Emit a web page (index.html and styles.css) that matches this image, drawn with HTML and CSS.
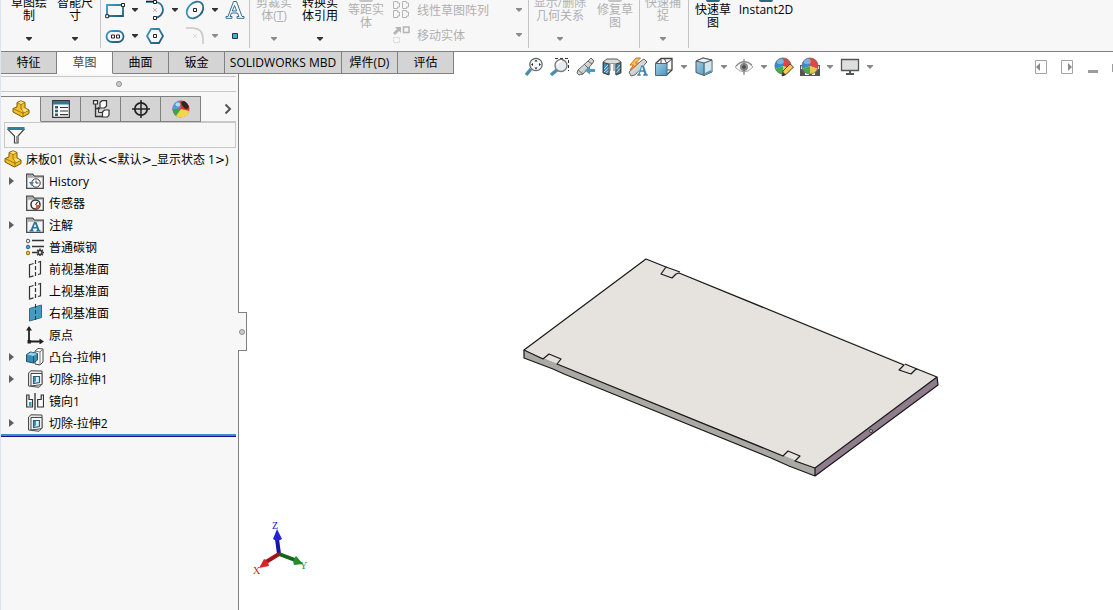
FILE: index.html
```html
<!DOCTYPE html>
<html lang="zh-CN">
<head>
<meta charset="utf-8">
<title>床板01</title>
<link rel="stylesheet" href="styles.css">
</head>
<body>
<svg class="defs" aria-hidden="true">
  <defs>
    <linearGradient id="blue" x1="0" y1="0" x2="1" y2="1"><stop offset="0" stop-color="#3e9cc4"/><stop offset="1" stop-color="#1f5878"/></linearGradient>
    <linearGradient id="cube" x1="0" y1="0" x2="1" y2="1"><stop offset="0" stop-color="#9fd0e6"/><stop offset="1" stop-color="#4b93b8"/></linearGradient>
    <linearGradient id="metal" x1="0" y1="0" x2="1" y2="1"><stop offset="0" stop-color="#ffffff"/><stop offset="1" stop-color="#a4a8aa"/></linearGradient>
    <symbol id="arrow" viewBox="0 0 6 4"><path d="M0 0h6v1L3 4 0 1z" fill="currentColor"/></symbol>
    <symbol id="part" viewBox="0 0 18 18">
      <path d="M1 8.500 5 7V2.500L9 .8l4 1.700v5.500l4 2v3.500L10.500 17 1 12z" fill="#f2bf2b" stroke="#7b5a08"/>
      <path d="M5 2.500 9 4.500v4.500l2 1.500V17M9 4.500l4-2M1.500 8.800l9.500 4.500 6-3" fill="none" stroke="#8c680d" stroke-width=".8"/>
      <path d="m6 2.500 3-1.200 3 1.200-3 1.500zM10 9l3-.5 3 1.700-4 2z" fill="#ffe27d"/>
    </symbol>
    <symbol id="folder" viewBox="0 0 18 18">
      <path d="M.7 16.300V2.200h6l1.500 2h9.100v12.100z" fill="#f4f5f6" stroke="#4a4a4a" stroke-width="1.300"/>
      <path d="M1.500 3h5l1 2H16.600v.8H1.500z" fill="#a9abad"/>
    </symbol>
    <symbol id="plane" viewBox="0 0 18 18">
      <path d="M6 4 3.500 4.700V17L6 16.300M12 2.300l2.500-.8v12.300L12 14.500M6 4l1.500-.5M6 16.300l1.500-.4" fill="none" stroke="#333" stroke-width="1.200"/>
      <path d="M9.500 0v18" stroke="#333" stroke-width="1.200" stroke-dasharray="4 2"/>
    </symbol>
    <symbol id="cut" viewBox="0 0 18 18">
      <path d="M2.500 3 5 .8 16 1v13l-3 3.300L2.500 16z" fill="#e4e6e7" stroke="#4a4a4a"/>
      <path d="M5 3.500h11v11L5 16z" fill="#fff" stroke="#4a4a4a"/>
      <path d="M7.500 6.500h6v6l-6 1z" fill="#d6edf7" stroke="#2b5c76" stroke-width="1.200"/>
      <path d="M8 7h2v4l-2 2z" fill="#3c8fb7"/>
    </symbol>
    <symbol id="ball" viewBox="0 0 20 20">
      <circle cx="10" cy="10" r="9" fill="#e6e6e6"/>
      <path d="M10 10V1a9 9 0 0 0-8.500 12z" fill="#3789d1"/><path d="M10 10V1a9 9 0 0 1 8.500 12z" fill="#dc4747"/>
      <path d="M10 10 1.500 13A9 9 0 0 0 10 19z" fill="#4aaa4b"/><path d="m10 10 8.500 3A9 9 0 0 1 10 19z" fill="#eac849"/>
      <ellipse cx="7" cy="5" rx="4" ry="3" fill="#fff" opacity=".35"/><circle cx="10" cy="10" r="9" fill="none" stroke="#6b6b6b" stroke-width=".8"/>
    </symbol>
  </defs>
</svg>

<div class="app">
  <header class="ribbon">
    <section class="group group-sketch">
      <button class="tool"><span>草图绘制</span><svg class="arrow"><use href="#arrow"/></svg></button>
      <button class="tool"><span>智能尺寸</span><svg class="arrow"><use href="#arrow"/></svg></button>
    </section>
    <section class="group group-shapes">
      <div class="shape-row">
        <button class="shape" aria-label="矩形"><svg viewBox="0 0 20 20"><path d="M2 5h16v11H2z" fill="none" stroke="url(#blue)" stroke-width="1.800"/><path d="M.7 14.700h3v3h-3zM16.500 3.500h3v3h-3z" fill="#fff" stroke="#222"/></svg></button>
        <button class="drop" aria-label="矩形选项"><svg class="arrow"><use href="#arrow"/></svg></button>
        <button class="shape" aria-label="圆弧"><svg viewBox="0 0 20 20"><path d="M1 1.800h9a8 8 0 0 1 0 16" fill="none" stroke="url(#blue)" stroke-width="1.800"/><path d="M1 1.500h8" stroke="#222" stroke-width="1.500"/><path d="M8.500.5h3v3h-3zM8.500 16.500h3v3h-3z" fill="#fff" stroke="#222"/><path d="m8 8 4 4m0-4-4 4" stroke="#bbb"/></svg></button>
        <button class="drop" aria-label="圆弧选项"><svg class="arrow"><use href="#arrow"/></svg></button>
        <button class="shape" aria-label="椭圆"><svg viewBox="0 0 20 20"><ellipse cx="10" cy="10" rx="9.500" ry="7" transform="rotate(-45 10 10)" fill="none" stroke="url(#blue)" stroke-width="1.800"/><path d="M8.500 8.500h3v3h-3z" fill="#fff" stroke="#222"/></svg></button>
        <button class="drop" aria-label="椭圆选项"><svg class="arrow"><use href="#arrow"/></svg></button>
        <button class="shape" aria-label="文字"><svg viewBox="0 0 20 20"><path d="M8.500 1.500h3L17 16.500h2v1.800h-7v-1.800h2l-1.500-3.500H6.500L5 16.500h2v1.800H1v-1.800h2zM7.300 11h4.400L9.500 5.500z" fill="#fff" stroke="#326d91"/></svg></button>
      </div>
      <div class="shape-row">
        <button class="shape" aria-label="槽口"><svg viewBox="0 0 20 20"><rect x="1.500" y="5" width="17" height="11" rx="5.500" fill="none" stroke="url(#blue)" stroke-width="1.800"/><path d="M6.500 9h3v3h-3zM11.500 9h3v3h-3z" fill="#fff" stroke="#222"/></svg></button>
        <button class="drop" aria-label="槽口选项"><svg class="arrow"><use href="#arrow"/></svg></button>
        <button class="shape" aria-label="多边形"><svg viewBox="0 0 20 20"><path d="M6 3h8l4 7-4 7H6l-4-7z" fill="none" stroke="url(#blue)" stroke-width="1.800"/><path d="M8.500 8.500h3v3h-3z" fill="#fff" stroke="#222"/></svg></button>
        <span class="blank"></span>
        <button class="shape" aria-label="圆角" disabled><svg viewBox="0 0 20 20"><path d="M1 2h6q11 0 11 11v5" fill="none" stroke="#c9c9c9" stroke-width="1.600"/><path d="m8 8 4 4m0-4-4 4" stroke="#ddd"/></svg></button>
        <button class="drop" aria-label="圆角选项" disabled><svg class="arrow"><use href="#arrow"/></svg></button>
        <button class="shape" aria-label="点"><svg viewBox="0 0 20 20"><path d="M7.500 7.500h5v5h-5z" fill="#4fa7c9" stroke="#173d54"/></svg></button>
      </div>
    </section>
    <section class="group group-entities">
      <button class="tool" disabled><span>剪裁实体(<u>T</u>)</span><svg class="arrow"><use href="#arrow"/></svg></button>
      <button class="tool"><span>转换实体引用</span><svg class="arrow"><use href="#arrow"/></svg></button>
      <button class="tool raised" disabled><i class="stub"></i><span>等距实体</span></button>
      <div class="list">
        <button class="list-item" disabled><svg viewBox="0 0 20 20"><path d="M2.500 1.500h4v1.500h2v4h-2v1.500h-4zM11.500 1.500h4v1.500h2v4h-2v1.500h-4zM2.500 10.500h4v1.500h2v4h-2v1.500h-4zM11.500 10.500h4v1.500h2v4h-2v1.500h-4z" fill="none" stroke="#b4b4b4"/></svg><span>线性草图阵列</span><svg class="arrow"><use href="#arrow"/></svg></button>
        <button class="list-item" disabled><svg viewBox="0 0 20 20"><path d="m2 8 4-4-2-2h6v6L8 6 4 10z" fill="#b4b4b4"/><path d="M12.500 2h5.500v5.500h-5.500z" fill="none" stroke="#b4b4b4" stroke-width="1.500"/><path d="M2.500 12.500h6v5h-6z" fill="none" stroke="#d2d2d2" stroke-dasharray="2 1"/></svg><span>移动实体</span><svg class="arrow"><use href="#arrow"/></svg></button>
      </div>
    </section>
    <section class="group group-relations">
      <button class="tool wide" disabled><span>显示/删除几何关系</span><svg class="arrow"><use href="#arrow"/></svg></button>
      <button class="tool raised" disabled><i class="stub"></i><span>修复草图</span></button>
    </section>
    <section class="group group-snap">
      <button class="tool" disabled><span>快速捕捉</span><svg class="arrow"><use href="#arrow"/></svg></button>
    </section>
    <section class="group group-quick">
      <button class="tool raised"><i class="stub"></i><span>快速草图</span></button>
      <button class="tool raised wide single"><i class="stub"></i><span>Instant2D</span></button>
    </section>
  </header>

  <div class="strip">
    <nav class="tabs">
      <button class="tab">特征</button><button class="tab active">草图</button><button class="tab">曲面</button><button class="tab">钣金</button><button class="tab tab-mbd">SOLIDWORKS MBD</button><button class="tab">焊件(D)</button><button class="tab">评估</button>
    </nav>
    <div class="hud">
      <button aria-label="整屏显示全图"><svg viewBox="0 0 20 20"><path d="m2 18 5-6" stroke="#4b8fb0" stroke-width="3.500"/><circle cx="12" cy="7.500" r="6.200" fill="#f5f7f8" stroke="#666" stroke-width="1.300"/><path d="m10.500 4.500 1.500-2 1.500 2zM10.500 10.500l1.500 2 1.500-2zM9 6 7 7.500 9 9zM15 6l2 1.500L15 9z" fill="#222"/></svg></button>
      <button aria-label="局部放大"><svg viewBox="0 0 20 20"><path d="M5 1.500h13.500V14" fill="none" stroke="#333" stroke-dasharray="3 2"/><path d="m1 18 6-5" stroke="#4b8fb0" stroke-width="3.500"/><circle cx="11" cy="8.500" r="6" fill="#e4eef2" stroke="#777" stroke-width="1.300"/><path d="M7 8q1-4 5-4" fill="none" stroke="#fff" stroke-width="2"/></svg></button>
      <button aria-label="上一视图"><svg viewBox="0 0 20 20"><path d="m2 13 10-9 3-3 3 3-2 3-9 10-4 1-2-2z" fill="url(#metal)" stroke="#666"/><path d="m12 4 4 3M8 7l4 4M2 13l5 4" stroke="#666"/><path d="m9 13.500 5-4v2.500h5v3h-5v2.500z" fill="#4b9bc0"/></svg></button>
      <button aria-label="剖面视图"><svg viewBox="0 0 20 20"><path d="M1 5 5 2h10l4 3v11l-5 2V7H7v11l-6-2z" fill="#dbdddf" stroke="#555"/><path d="M7 7h7v7H7z" fill="#b3b7b9"/><path d="M10 7v7" stroke="#f9f9f9" stroke-width="2"/><path d="m1.500 5.500 5.500 1.500V17.500l-5.500-1.800zM14 7l4.500-1.500V15.700L14 17.500z" fill="#4089b0" stroke="#444"/><path d="m2 12 4-4M2 15l4.500-4M4 16l2.500-2M14.500 12l3.500-4M14.500 15.500l3.500-4" stroke="#dff3fa" stroke-width=".8"/></svg></button>
      <button aria-label="动态注解视图"><svg viewBox="0 0 20 20"><path d="m1 15 12-11 3-2 3 3L7 18l-4 1z" fill="url(#metal)" stroke="#666"/><path d="M8 1 2 8h3.500L2 13l9-7H7.500l5-5z" fill="#f8c35c" stroke="#cd6b1d"/><path d="M13 8h3l3 9h1v2h-5v-2h1l-.5-2h-3l-.5 2h1v2H9v-2h1zM13 13h2l-1-3z" fill="#3e86ae" stroke="#fff" stroke-width=".5"/></svg></button>
      <button aria-label="视图定向"><svg viewBox="0 0 20 20"><path d="M1.500 6.500 7 1.500h11V13l-5.500 5" fill="none" stroke="#444" stroke-width="1.300"/><path d="M7 2v11l-5 5M7 13h11M10 1l3 6m0-1 5-4" fill="none" stroke="#444"/><path d="M1.500 6.500h11.500V18.500H1.500z" fill="url(#cube)" stroke="#386f8c"/></svg></button>
      <button class="mini" aria-label="视图定向选项"><svg class="arrow"><use href="#arrow"/></svg></button>
      <button aria-label="显示样式"><svg viewBox="0 0 20 20"><path d="m2 4 7-3 9 2v12l-8 3.500-8-3z" fill="url(#cube)" stroke="#555"/><path d="m2 4 8 2 8-3-9-2z" fill="#e5f1f6" stroke="#555"/><path d="M10.500 6.500 17.500 4v10.500l-7 3.500z" fill="#cde7f1"/><path d="M10 6v12.500" stroke="#555"/><path d="m11 16 6-3v2l-6 3z" fill="#4b9bc0"/></svg></button>
      <button class="mini" aria-label="显示样式选项"><svg class="arrow"><use href="#arrow"/></svg></button>
      <button aria-label="隐藏项目"><svg viewBox="0 0 20 20"><path d="M1 10q9-11 18 0-9 10-18 0z" fill="#f4f4f4" stroke="#aaa"/><circle cx="10" cy="10" r="4" fill="#8b8b8b"/><circle cx="10" cy="10" r="1.800" fill="#333"/><path d="M10 2v16" stroke="#666"/><path d="M2 9Q10 1 18 8" fill="none" stroke="#888" stroke-width="1.200"/></svg></button>
      <button class="mini" aria-label="隐藏项目选项"><svg class="arrow"><use href="#arrow"/></svg></button>
      <button aria-label="编辑外观"><svg viewBox="0 0 20 20"><use href="#ball" width="18" height="18"/><path d="m8 19 1-5 7-7 3.500 3-7 7z" fill="#f5c95d" stroke="#5c4720"/><path d="m8 19 1-4 3 3z" fill="#333"/></svg></button>
      <button aria-label="应用布景"><svg viewBox="0 0 20 20"><path d="M0 8h20v11H0z" fill="#555"/><path d="M1 9h4v3H1zM15 9h4v3h-4zM5 15h4v3H5zM12 15h3v3h-3z" fill="#fff"/><use href="#ball" x="1" width="18" height="18"/></svg></button>
      <button class="mini" aria-label="布景选项"><svg class="arrow"><use href="#arrow"/></svg></button>
      <button aria-label="视图设定"><svg viewBox="0 0 20 20"><path d="M1.500 2.500h17v11h-17z" fill="#dcdfe0" stroke="#555" stroke-width="1.300"/><path d="M9 14h2v2h3v2H6v-2h3z" fill="#555"/></svg></button>
      <button class="mini" aria-label="视图设定选项"><svg class="arrow"><use href="#arrow"/></svg></button>
    </div>
    <div class="window-controls">
      <button aria-label="向左"><svg viewBox="0 0 14 14"><path d="M1.500.5h11v13h-11z" fill="#fff" stroke="#a3a3a3"/><path d="M6 3v8L2 7z" fill="#8a8a8a"/></svg></button>
      <button aria-label="向右"><svg viewBox="0 0 14 14"><path d="M1.500.5h11v13h-11z" fill="#fff" stroke="#a3a3a3"/><path d="M8 3v8l4-4z" fill="#8a8a8a"/></svg></button>
      <button aria-label="最小化"><svg viewBox="0 0 14 14"><path d="M2 10h10v3H2z" fill="#9c9c9c"/></svg></button>
      <button class="clipped" aria-label="还原"><svg viewBox="0 0 1 14"><path d="M0 4h1v8H0z" fill="#9c9c9c"/></svg></button>
    </div>
  </div>

  <main class="workspace">
    <aside class="panel">
      <div class="grip"><i class="dot"></i></div>
      <div class="panel-tabs">
        <button class="ptab active" aria-label="特征树"><svg viewBox="0 0 18 18"><use href="#part"/></svg></button>
        <button class="ptab" aria-label="属性"><svg viewBox="0 0 18 18"><path d="M.7.700h16.600v16.600H.7z" fill="#fff" stroke="#333" stroke-width="1.200"/><path d="M1 1h16v3.500H1z" fill="#2f7699"/><path d="M3 6h3v2.500H3zM3 9.700h3v2.500H3zM3 13.500h3V16H3z" fill="#28627f"/><path d="M8 7.500h8M8 11h8M8 14.700h8" stroke="#333" stroke-width="1.200"/></svg></button>
        <button class="ptab" aria-label="配置"><svg viewBox="0 0 18 18"><path d="M3.500 1v15.500H10M3.500 8.500H8" fill="none" stroke="#333" stroke-width="1.300"/><path d="M1.500.7h4V4h-4zM8 2.500l2-1.800h4.500V6l-2 2H8zM10.500 12l2-2H17v5l-1.500 2h-5z" fill="#fff" stroke="#333" stroke-width="1.200"/><path d="M6.500 7v5.500H10" fill="none" stroke="#333"/></svg></button>
        <button class="ptab" aria-label="尺寸专家"><svg viewBox="0 0 18 18"><circle cx="9" cy="9" r="6.200" fill="none" stroke="#222" stroke-width="1.700"/><path d="M9 0v18M0 9h18" stroke="#222" stroke-width="1.500"/></svg></button>
        <button class="ptab" aria-label="外观"><svg viewBox="0 0 18 18"><circle cx="9" cy="9" r="8.500" fill="#d73a30"/><path d="M9 8Q6 1 9 .500A8.500 8.500 0 0 0 .5 10z" fill="#4aa0d8"/><path d="M9 9 .5 9A8.500 8.500 0 0 0 8 17.500z" fill="#3fa445"/><path d="m9 9 8.300 2A8.500 8.500 0 0 1 4 16z" fill="#f4d64a"/><ellipse cx="13" cy="5" rx="4.500" ry="2.500" transform="rotate(48 13 5)" fill="#292929"/><ellipse cx="6" cy="4.500" rx="2.500" ry="2" fill="#fff" opacity=".6"/></svg></button>
        <button class="more" aria-label="更多"><svg viewBox="0 0 8 12"><path d="m1.500 1.500 4.500 4.500-4.500 4.500" fill="none" stroke="#555" stroke-width="2"/></svg></button>
      </div>
      <label class="filter"><svg viewBox="0 0 18 18"><path d="M1 3.500h16L11 10v7H7.500v-7z" fill="#fff" stroke="#444" stroke-width="1.200"/><path d="M9 10h1.500v6H9z" fill="#999"/><path d="M.5 1h17v3H.5z" fill="#2e7fa5"/></svg><input type="text" aria-label="过滤"></label>
      <div class="root"><svg viewBox="0 0 18 18"><use href="#part"/></svg><span>床板01&nbsp; (默认<b>&lt;&lt;</b>默认<b>&gt;</b>_显示状态 1<b>&gt;</b>)</span></div>
      <ul class="tree">
        <li><i class="twist"></i><svg viewBox="0 0 18 18"><use href="#folder"/><circle cx="10" cy="11" r="4.200" fill="#fff" stroke="#333"/><path d="M10 8.500V11h2.500" fill="none" stroke="#333"/><path d="M3 10h5l-2.500 4z" fill="#3889b0"/></svg><span>History</span></li>
        <li><i></i><svg viewBox="0 0 18 18"><use href="#folder"/><circle cx="9.500" cy="10.500" r="4.500" fill="#fff" stroke="#333" stroke-width="1.500"/><path d="m9.500 11 2-3" stroke="#333" stroke-width="1.200"/><path d="M10 11h4q-1 4-4 4z" fill="#e6543a"/></svg><span>传感器</span></li>
        <li><i class="twist"></i><svg viewBox="0 0 18 18"><use href="#folder"/><path d="M8 6h2.500l3 8h1v1.500h-4V14h.8l-.4-1.500H7.200L6.800 14h.7v1.500h-4V14h1zM7.700 11h2.800L9 7.800z" fill="#28759e"/></svg><span>注解</span></li>
        <li><i></i><svg viewBox="0 0 18 18"><circle cx="2" cy="3" r="1.800" fill="#eee" stroke="#555"/><circle cx="2" cy="9" r="1.800" fill="#4b9fc6" stroke="#276584"/><circle cx="2" cy="15" r="1.800" fill="#f3c424" stroke="#8c6d0a"/><path d="M6 2.500h12M6 8.500h12M6 14.500h4" stroke="#333" stroke-width="1.600"/><circle cx="14" cy="14.500" r="2" fill="#eee" stroke="#333" stroke-width="1.600"/><path d="M14 10.500v1.500M14 17v1.500M10 14.500h1.500M16.500 14.500H18M11.200 11.700l1 1M15.800 16.300l1 1M16.800 11.700l-1 1M12.200 16.300l-1 1" stroke="#333" stroke-width="1.500"/></svg><span>普通碳钢</span></li>
        <li><i></i><svg viewBox="0 0 18 18"><use href="#plane"/></svg><span>前视基准面</span></li>
        <li><i></i><svg viewBox="0 0 18 18"><use href="#plane"/></svg><span>上视基准面</span></li>
        <li><i></i><svg viewBox="0 0 18 18"><path d="M3.500 4.500 15.500 1v12.500L3.500 17z" fill="#479ac0" stroke="#286d8e"/><path d="M9.500 0v18" stroke="#173f55" stroke-dasharray="4 2"/></svg><span>右视基准面</span></li>
        <li><i></i><svg viewBox="0 0 18 18"><path d="M3 3v12.500h12" fill="none" stroke="#222" stroke-width="1.800"/><path d="m3 0 3 4.500H0zM18 15.500 13.500 12.500v6zM1.500 14h3.500v3.500H1.500z" fill="#222"/></svg><span>原点</span></li>
        <li><i class="twist"></i><svg viewBox="0 0 18 18"><path d="m9 3 3-2.500 5 .5v13l-3 3-5-1z" fill="#fff" stroke="#444"/><path d="M14 4v13M9 3l5 1 3-3" fill="none" stroke="#777"/><path d="m.5 6.500 4-2.500 7 1.500V12l-4 3-7-1.500z" fill="#3d8cb2" stroke="#1e5370"/><path d="m1 6.500 4-2 6 1.200L7.500 8z" fill="#9dd0e5"/><path d="M7.500 8v7" stroke="#1e5370"/></svg><span>凸台-拉伸1</span></li>
        <li><i class="twist"></i><svg viewBox="0 0 18 18"><use href="#cut"/></svg><span>切除-拉伸1</span></li>
        <li><i></i><svg viewBox="0 0 18 18"><path d="M.7 3H3v4.500h3.500V15H.7zM17.500 3h-2.300v4.500h-3.500V15h5.800z" fill="#fff" stroke="#333" stroke-width="1.200"/><path d="M3 10h2.500v4H3z" fill="#3d99c1"/><path d="M9 1v17" stroke="#222" stroke-width="1.200"/></svg><span>镜向1</span></li>
        <li><i class="twist"></i><svg viewBox="0 0 18 18"><use href="#cut"/></svg><span>切除-拉伸2</span></li>
      </ul>
      <div class="rollback"></div>
      <button class="splitter" aria-label="折叠面板"><i class="dot"></i></button>
    </aside>

    <section class="viewport">
      <svg viewBox="239 74 874 536" preserveAspectRatio="xMinYMin meet" role="img" aria-label="床板01 模型">
        <path d="M524 350 815 468v8l-26-10-18-8-207-84-11-5-29-11z" fill="#aaa9a4"/>
        <path d="m815 468 122-91 1 8-123 91z" fill="#8f7c8d"/>
        <path d="m524 350 122-91 291 118-122 91z" fill="#e6e2dd"/>
        <g fill="none" stroke="#181818" stroke-width="1.200" stroke-linejoin="round">
          <path d="M666 267 646 259 524 350l19 9 6-5 12 5-4 5 226 92 5-5 12 5-5 5 20 7 122-91-20-8-2 1-4 4-12-4 5-5-225-92-3 1-4 4-11-4z"/>
          <path d="m666 267 14 5M905 364l12 5"/>
          <path d="M524 350v8l29 11 11 5 207 84 18 8 26 10v-8M815 476l123-91-1-8"/>
        </g>
        <circle cx="871" cy="431" r="1.500" fill="#ccc" stroke="#222" stroke-width=".8"/>
        <path d="m279 554-2-15" stroke="#1616a5" stroke-width="4"/><path d="m277 529 5 10q-5 3-9 0z" fill="#2424d6"/>
        <path d="m279 554 16 6" stroke="#126617" stroke-width="4"/><path d="m303 564-9 1q-2-4 2-9z" fill="#258d2b"/>
        <path d="m279 554-13 8" stroke="#a51218" stroke-width="4"/><path d="m259 568 5-9q4 1 5 7z" fill="#d92428"/>
        <g class="axis"><text x="272" y="529" fill="#1414dc">Z</text><text x="253" y="574" fill="#e01616">X</text><text x="300" y="569" fill="#128c18">Y</text></g>
      </svg>
    </section>
  </main>
</div>
</body>
</html>
```
FILE: styles.css
```css
* { box-sizing: border-box; }
body {
  margin: 0;
  background: #fff;
  color: #000;
  font: 12px/14px "Open Sans", "Noto Sans CJK SC", sans-serif;
  overflow: hidden;
}
button {
  margin: 0;
  padding: 0;
  border: 0;
  background: none;
  color: inherit;
  font: inherit;
}
svg { display: block; flex: none; }
i { display: block; flex: none; }
.defs { position: absolute; width: 0; height: 0; }
.app {
  display: flex;
  flex-direction: column;
  min-height: 100vh;
  border-left: 1px solid #dfe3ef;
}
.arrow { width: 6px; height: 4px; color: #333; }
:disabled { color: #b0b0b0; }
:disabled .arrow { color: #8c8c8c; }

/* Ribbon */
.ribbon {
  display: flex;
  height: 52px;
  background: #f7f7f7;
  border-bottom: 1px solid #808080;
  line-height: 13px;
  overflow: hidden;
}
.group {
  display: flex;
  flex: none;
  height: 48px;
  border-right: 1px solid #c4c4c4;
}
.group-sketch { padding: 0 2px 0 5px; }
.group-shapes { flex-direction: column; gap: 6px; padding: 0 4px; }
.group-entities { padding: 0 3px 0 1px; }
.group-relations { gap: 4px; padding: 0 1px 0 3px; }
.group-snap { padding-right: 2px; }
.group-quick { gap: 2px; padding-left: 1px; border-right: 0; }
.tool {
  display: flex;
  flex-direction: column;
  align-items: center;
  justify-content: flex-end;
  gap: 15px;
  width: 46px;
  padding: 0 5px 7px;
}
.tool span { text-align: center; word-break: break-all; }
.wide { width: 56px; padding-right: 1px; padding-left: 1px; }
.single span { white-space: nowrap; }
.raised { justify-content: flex-start; gap: 1px; }
.stub { width: 14px; height: 2px; border-radius: 0 0 6px 6px; background: #2a6685; }
:disabled .stub { background: #c4c4c4; }
.shape-row { display: flex; height: 20px; }
.shape, .shape svg, .blank { width: 20px; height: 20px; }
.drop { display: flex; width: 20px; align-items: center; justify-content: center; }
.list { display: flex; flex-direction: column; gap: 5px; width: 136px; padding-left: 2px; }
.list-item { display: flex; align-items: center; gap: 6px; height: 20px; padding-right: 3px; }
.list-item svg:first-child { width: 20px; height: 20px; }
.list-item .arrow { margin-left: auto; }

/* Command tabs and view toolbar */
.strip { display: flex; height: 22px; }
.tabs { display: flex; flex: none; }
.tab {
  width: 56px;
  background: #d4d4d4;
  border-right: 1px solid #808080;
  border-bottom: 1px solid #808080;
  white-space: nowrap;
}
.tab-mbd { width: 117px; }
.tab.active { background: #fdfdfd; border-bottom-color: #fdfdfd; color: #444; }
.hud { display: flex; gap: 6px; margin-left: 70px; padding-top: 5px; }
.hud button, .hud button > svg:not(.arrow) { width: 20px; height: 20px; }
.hud .mini { display: flex; width: 8px; align-items: center; justify-content: center; }
.mini .arrow { color: #888; }
.window-controls { display: flex; gap: 12px; margin-left: auto; padding-top: 8px; }
.window-controls button, .window-controls svg { width: 14px; height: 14px; }
.window-controls .clipped, .clipped svg { width: 1px; }

/* Feature panel */
.workspace { display: flex; flex: 1; }
.panel {
  position: relative;
  flex: none;
  width: 238px;
  background: #f7f7f7;
  border-right: 1px solid #808080;
}
.grip {
  display: flex;
  align-items: center;
  justify-content: center;
  height: 16px;
  margin: 2px 2px 4px 0;
  border: solid #c8c8c8;
  border-width: 1px 0;
}
.dot { width: 6px; height: 6px; border: 1px solid #909090; border-radius: 50%; background: #ccc; }
.panel-tabs { display: flex; height: 26px; border-bottom: 1px solid #c8c8c8; margin-right: 2px; }
.ptab {
  display: flex;
  align-items: center;
  justify-content: center;
  width: 40px;
  height: 26px;
  background: #d4d4d4;
  border: solid #808080;
  border-width: 1px 1px 1px 0;
}
.ptab.active { background: #f7f7f7; border-bottom-color: #f7f7f7; }
.ptab svg { width: 18px; height: 18px; }
.more { margin-left: auto; padding-right: 4px; }
.more svg { width: 8px; height: 12px; }
.filter {
  display: flex;
  align-items: center;
  height: 26px;
  margin: 0 2px 0 3px;
  padding-left: 2px;
  border: 1px solid #c8c8c8;
}
.filter svg { width: 18px; height: 18px; }
.filter input { flex: 1; min-width: 0; border: 0; background: none; font: inherit; }
.root { display: flex; align-items: center; gap: 4px; height: 22px; padding-left: 3px; white-space: nowrap; }
.root svg { width: 18px; height: 18px; }
.root b { font-family: "DejaVu Sans", sans-serif; font-weight: 400; }
.root span, .tree span { padding-top: 2px; }
.tree { margin: 0; padding: 0; list-style: none; }
.tree li { display: flex; align-items: center; height: 22px; padding-left: 8px; }
.tree i { width: 17px; height: 9px; }
.twist::before {
  content: "";
  display: block;
  width: 0;
  border: solid transparent;
  border-width: 4px 0 4px 5px;
  border-left-color: #606060;
}
.tree svg { width: 18px; height: 18px; margin-right: 5px; }
.rollback { height: 3px; margin-right: 2px; background: #3a8fc8; border-bottom: 1px solid #1f0a96; }
.splitter {
  position: absolute;
  top: 238px;
  right: -9px;
  display: flex;
  align-items: center;
  justify-content: center;
  width: 9px;
  height: 39px;
  background: #f7f7f7;
  border: 1px solid #808080;
  border-left: 0;
}
.viewport { flex: 1; min-width: 0; }
.viewport svg { width: 100%; }
.axis { font: 10px "Liberation Serif", serif; }
```
